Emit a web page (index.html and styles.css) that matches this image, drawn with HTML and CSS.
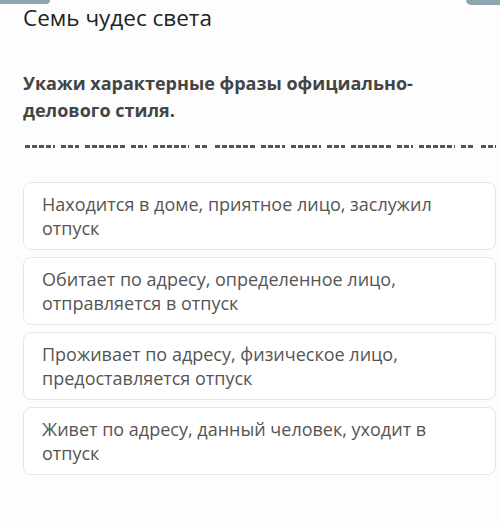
FILE: index.html
```html
<!DOCTYPE html>
<html lang="ru">
<head>
    <meta charset="UTF-8">
    <meta name="viewport" content="width=device-width, initial-scale=1.0">
    <title>Семь чудес света</title>
    <link rel="stylesheet" href="styles.css">
</head>
<body>
    <div class="top-bar">
        <span class="tab tab-left"></span>
        <span class="tab tab-right"></span>
    </div>
    <div class="page">
        <h1 class="title">Семь чудес света</h1>
        <h2 class="question">Укажи характерные фразы официально-делового стиля.</h2>
        <div class="hint">
            <span class="d w30"></span><span class="d w18"></span><span class="d w40"></span><span class="d w16"></span>
            <span class="d w36"></span><span class="d w14"></span><span class="d w40"></span><span class="d w24"></span>
            <span class="d w30"></span><span class="d w18"></span><span class="d w40"></span><span class="d w16"></span>
            <span class="d w36"></span><span class="d w14"></span><span class="d w40"></span><span class="d w24"></span>
        </div>
        <div class="answers">
            <div class="answer">Находится в доме, приятное лицо, заслужил отпуск</div>
            <div class="answer">Обитает по адресу, определенное лицо, отправляется в отпуск</div>
            <div class="answer">Проживает по адресу, физическое лицо, предоставляется отпуск</div>
            <div class="answer">Живет по адресу, данный человек, уходит в отпуск</div>
        </div>
    </div>
</body>
</html>
```

FILE: styles.css
```css
body {
    font-family: "Open Sans", Arial, sans-serif;
    background-color: #fdfdfd;
    color: #222;
    margin: 0;
    padding: 0;
}
.top-bar {
    display: flex;
    justify-content: space-between;
    height: 5px;
}
.tab {
    display: block;
    background-color: #90a5b2;
    height: 4px;
}
.tab-left {
    width: 50px;
    border-radius: 0 0 6px 0;
}
.tab-right {
    width: 34px;
    height: 5px;
    border-radius: 0 0 0 6px;
}
.page {
    padding: 0 4px 0 23px;
}
.title {
    font-size: 22.5px;
    font-weight: normal;
    margin: 0;
    line-height: 28px;
    margin-top: -1px;
    color: #222;
}
.question {
    font-size: 18px;
    font-weight: bold;
    color: #444;
    line-height: 27px;
    margin: 38px 0 0 0;
    width: 420px;
}
.hint {
    display: flex;
    gap: 6px;
    margin: 21px 0 0 2px;
    height: 3px;
    overflow: hidden;
}
.d {
    display: block;
    height: 3px;
    flex-shrink: 0;
    background: repeating-linear-gradient(90deg, #555 0 5px, transparent 5px 7px);
}
.w14 { width: 14px; }
.w16 { width: 16px; }
.w18 { width: 18px; }
.w24 { width: 24px; }
.w30 { width: 30px; }
.w36 { width: 36px; }
.w40 { width: 40px; }
.answers {
    display: flex;
    flex-direction: column;
    gap: 7px;
    margin-top: 34px;
}
.answer {
    border: 1px solid #e6e6e6;
    border-radius: 8px;
    background-color: #fff;
    padding: 9px 40px 9px 18px;
    font-size: 18px;
    line-height: 24px;
    color: #555;
}
```
